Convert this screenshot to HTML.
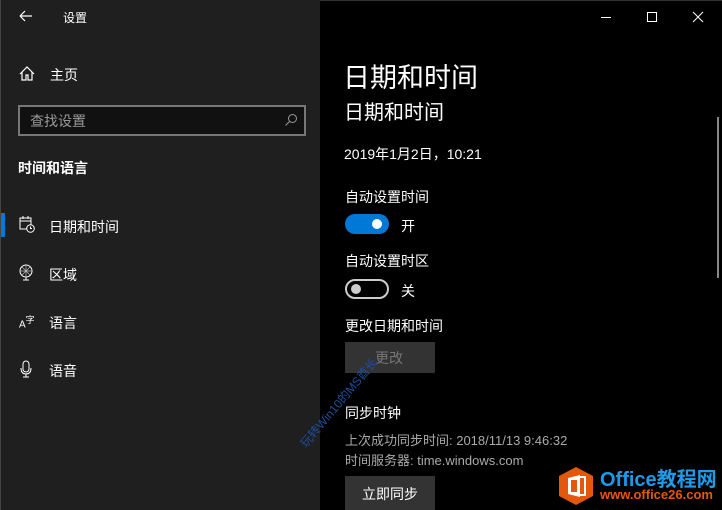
<!DOCTYPE html><html><head><meta charset="utf-8"><style>
*{margin:0;padding:0;box-sizing:border-box}
body{width:722px;height:510px;overflow:hidden;background:#000;font-family:"Liberation Sans","Noto Sans CJK SC",sans-serif;color:#fff;position:relative}
.side{position:absolute;left:0;top:0;width:320px;height:510px;background:#1f1f1f;border-left:1px solid #444}
.a{position:absolute;white-space:nowrap}
.t14{font-size:14px}
.tog{position:absolute;width:44px;height:20px;border-radius:10px}
</style></head><body>
<div class="side">
<svg class="a" style="left:17px;top:9px" width="16" height="14"><path d="M2 7H14M2 7L7 2M2 7L7 12" stroke="#fff" stroke-width="1.2" fill="none"/></svg>
<div class="a" style="left:62px;top:9px;font-size:12px">设置</div>
<svg class="a" style="left:18px;top:66px" width="16" height="15"><path d="M1 8L8 1L15 8M3 6V14H7V9H9V14H13V6" stroke="#fff" stroke-width="1.2" fill="none"/></svg>
<div class="a t14" style="left:49px;top:65px">主页</div>
<div class="a" style="left:17px;top:105px;width:288px;height:31px;border:2px solid #777;background:#111"></div>
<div class="a t14" style="left:29px;top:111px;color:#999">查找设置</div>
<svg class="a" style="left:283px;top:113px" width="14" height="14"><circle cx="8.5" cy="5.5" r="4" stroke="#999" fill="none"/><path d="M5.5 8.5L1.5 12.5" stroke="#999"/></svg>
<div class="a t14" style="left:17px;top:158px;font-weight:bold">时间和语言</div>
<div class="a" style="left:0;top:213px;width:4px;height:24px;background:#0078d7"></div>
<svg class="a" style="left:18px;top:216px" width="16" height="17"><rect x="1" y="2" width="11" height="11" stroke="#fff" fill="none"/><path d="M1 5H12M4 0V3M9 0V3" stroke="#fff"/><circle cx="11.5" cy="12.5" r="3.8" fill="#1f1f1f" stroke="#fff"/><path d="M11.5 10.5V12.5H13" stroke="#fff" fill="none"/></svg>
<div class="a t14" style="left:48px;top:217px">日期和时间</div>
<svg class="a" style="left:18px;top:264px" width="16" height="18"><circle cx="7" cy="7" r="6" stroke="#fff" fill="none"/><path d="M1 7H13M7 1V13M3 3L11 11M11 3L3 11" stroke="#bbb" stroke-width=".7"/><path d="M7 13V16M4 16H10" stroke="#fff"/></svg>
<div class="a t14" style="left:48px;top:265px">区域</div>
<div class="a" style="left:18px;top:313px;font-size:10px">A<sup style="font-size:9px">字</sup></div>
<div class="a t14" style="left:48px;top:313px">语言</div>
<svg class="a" style="left:18px;top:360px" width="14" height="18"><rect x="4" y="1" width="6" height="11" rx="3" stroke="#fff" fill="none"/><path d="M2 8Q2 14 7 14Q12 14 12 8M7 14V17M4 17H10" stroke="#fff" fill="none"/></svg>
<div class="a t14" style="left:48px;top:361px">语音</div>
</div>
<div class="a" style="left:320px;top:0;width:480px;height:1px;background:#333"></div>
<svg class="a" style="left:600px;top:10px" width="115" height="16"><path d="M1 7.5H11" stroke="#fff"/><rect x="47.5" y="2.5" width="9" height="9" stroke="#fff" fill="none"/><path d="M93 2L103 12M103 2L93 12" stroke="#fff"/></svg>
<div class="a" style="left:717px;top:117px;width:2px;height:161px;background:#888"></div>
<div class="a" style="left:343px;top:56px;font-size:27px">日期和时间</div>
<div class="a" style="left:344px;top:96px;font-size:20px">日期和时间</div>
<div class="a t14" style="left:344px;top:144px">2019年1月2日，10:21</div>
<div class="a t14" style="left:345px;top:187px">自动设置时间</div>
<div class="tog" style="left:345px;top:214px;background:#0078d7"></div>
<div class="a" style="left:372px;top:219px;width:10px;height:10px;border-radius:5px;background:#fff"></div>
<div class="a t14" style="left:401px;top:216px">开</div>
<div class="a t14" style="left:345px;top:251px">自动设置时区</div>
<div class="tog" style="left:345px;top:279px;border:2px solid #ccc"></div>
<div class="a" style="left:351px;top:284px;width:10px;height:10px;border-radius:5px;background:#ccc"></div>
<div class="a t14" style="left:401px;top:281px">关</div>
<div class="a t14" style="left:345px;top:316px">更改日期和时间</div>
<div class="a" style="left:345px;top:342px;width:90px;height:31px;background:#333"></div>
<div class="a t14" style="left:375px;top:348px;color:#777">更改</div>
<div class="a" style="left:296px;top:440px;font-size:12px;color:#1e4f9a;transform:rotate(-50deg);transform-origin:left top">玩转Win10的MS酋长</div>
<div class="a t14" style="left:345px;top:403px">同步时钟</div>
<div class="a" style="left:345px;top:430px;font-size:13px;color:#aaa">上次成功同步时间: 2018/11/13 9:46:32</div>
<div class="a" style="left:345px;top:450px;font-size:13px;color:#aaa">时间服务器: time.windows.com</div>
<div class="a" style="left:345px;top:476px;width:90px;height:34px;background:#333"></div>
<div class="a t14" style="left:362px;top:484px">立即同步</div>
<svg class="a" style="left:557px;top:466px" width="38" height="40"><path d="M19 1L36 10V30L19 39L2 30V10Z" fill="#e3580c"/><path d="M11 12L23 9V31L11 28Z" fill="#fff"/><rect x="14" y="14" width="6" height="12" fill="#e3580c"/><path d="M23 11H28V29H23" stroke="#fff" stroke-width="2" fill="none"/></svg>
<div class="a" style="left:600px;top:463px;font-size:20px;font-weight:bold;color:#1e9be8">Office教程网</div>
<div class="a" style="left:600px;top:487px;font-size:13px;font-weight:bold;color:#e3580c">www.office26.com</div>
</body></html>
